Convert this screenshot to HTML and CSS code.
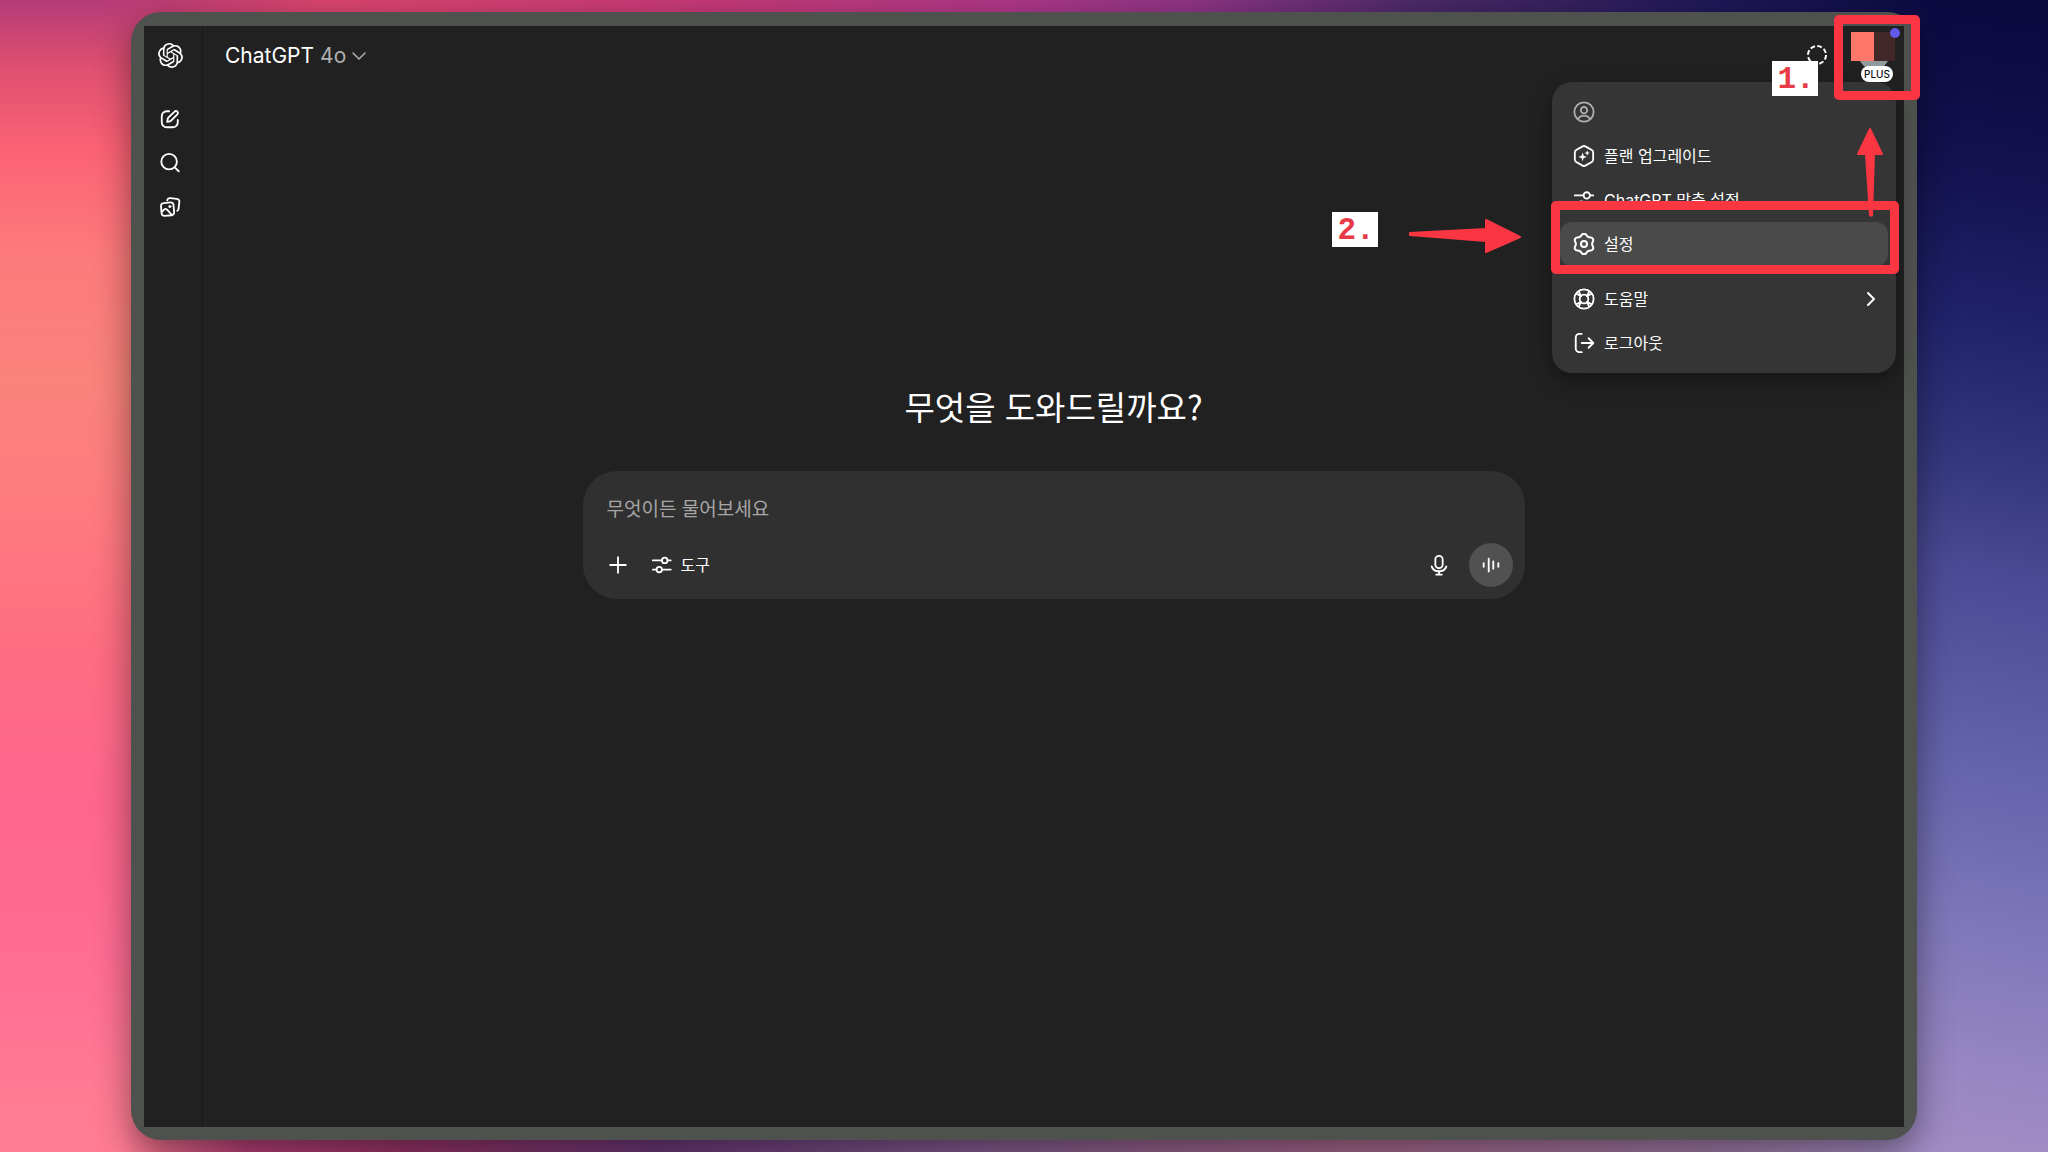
FILE: index.html
```html
<!DOCTYPE html>
<html lang="ko">
<head>
<meta charset="utf-8">
<meta name="viewport" content="width=device-width, initial-scale=1">
<title>ChatGPT</title>
<link rel="stylesheet" href="styles.css">
</head>
<body>
<div class="frame">
<div class="app">
  <nav class="sidebar" aria-label="사이드바">
    <a class="logo" href="#" aria-label="ChatGPT">
      <svg width="25" height="25" viewBox="0 0 24 24" fill="currentColor"><path d="M22.2819 9.8211a5.9847 5.9847 0 0 0-.5157-4.9108 6.0462 6.0462 0 0 0-6.5098-2.9A6.0651 6.0651 0 0 0 4.9807 4.1818a5.9847 5.9847 0 0 0-3.9977 2.9 6.0462 6.0462 0 0 0 .7427 7.0966 5.98 5.98 0 0 0 .511 4.9107 6.051 6.051 0 0 0 6.5146 2.9001A5.9847 5.9847 0 0 0 13.2599 24a6.0557 6.0557 0 0 0 5.7718-4.2058 5.9894 5.9894 0 0 0 3.9977-2.9001 6.0557 6.0557 0 0 0-.7475-7.0729zm-9.022 12.6081a4.4755 4.4755 0 0 1-2.8764-1.0408l.1419-.0804 4.7783-2.7582a.7948.7948 0 0 0 .3927-.6813v-6.7369l2.02 1.1686a.071.071 0 0 1 .038.052v5.5826a4.504 4.504 0 0 1-4.4945 4.4944zm-9.6607-4.1254a4.4708 4.4708 0 0 1-.5346-3.0137l.142.0852 4.783 2.7582a.7712.7712 0 0 0 .7806 0l5.8428-3.3685v2.3324a.0804.0804 0 0 1-.0332.0615L9.74 19.9502a4.4992 4.4992 0 0 1-6.1408-1.6464zM2.3408 7.8956a4.485 4.485 0 0 1 2.3655-1.9728V11.6a.7664.7664 0 0 0 .3879.6765l5.8144 3.3543-2.0201 1.1685a.0757.0757 0 0 1-.071 0l-4.8303-2.7865A4.504 4.504 0 0 1 2.3408 7.872zm16.5963 3.8558L13.1038 8.364 15.1192 7.2a.0757.0757 0 0 1 .071 0l4.8303 2.7913a4.4944 4.4944 0 0 1-.6765 8.1042v-5.6772a.79.79 0 0 0-.407-.667zm2.0107-3.0231l-.142-.0852-4.7735-2.7818a.7759.7759 0 0 0-.7854 0L9.409 9.2297V6.8974a.0662.0662 0 0 1 .0284-.0615l4.8303-2.7866a4.4992 4.4992 0 0 1 6.6802 4.66zM8.3065 12.863l-2.02-1.1638a.0804.0804 0 0 1-.038-.0567V6.0742a4.4992 4.4992 0 0 1 7.3757-3.4537l-.142.0805L8.704 5.459a.7948.7948 0 0 0-.3927.6813zm1.0976-2.3654l2.602-1.4998 2.6069 1.4998v2.9994l-2.5974 1.4997-2.6067-1.4997Z"/></svg>
    </a>
    <button class="side-button" aria-label="새 채팅">
      <svg class="icon" viewBox="0 0 24 24"><path d="M11 3.500H8.500a5.500 5.500 0 0 0-5.500 5.500v6.500a5.500 5.500 0 0 0 5.500 5.500h6.500a5.500 5.500 0 0 0 5.500-5.500V13"/><path d="M9 15.200l.5-3.200a3 3 0 0 1 .9-1.700l6.600-6.400a2.100 2.100 0 0 1 3 0 2.100 2.100 0 0 1 0 3l-6.500 6.700a3 3 0 0 1-1.600.9z"/></svg>
    </button>
    <button class="side-button" aria-label="검색">
      <svg class="icon" viewBox="0 0 24 24"><circle cx="11" cy="10.500" r="8.500"/><path d="M17.200 16.700l4.300 4.300"/></svg>
    </button>
    <button class="side-button" aria-label="라이브러리">
      <svg class="icon" viewBox="0 0 24 24"><path d="M5.200 7.700l7.300-.7a3 3 0 0 1 3.300 2.700l.7 8a3 3 0 0 1-2.700 3.300l-7.700.7a3 3 0 0 1-3.300-2.700l-.6-8a3 3 0 0 1 3-3.300z"/><path d="M3 17.300l2.600-2.500a2.300 2.300 0 0 1 3.200 0L14 20.700"/><circle cx="11.800" cy="11.500" r="1.200" fill="currentColor" stroke-width="1"/><path d="M9 4.700c.3-1.400 1.600-2.500 3.200-2.400l7.300.8a3 3 0 0 1 2.700 3.400l-.9 7.500c-.1 1-.6 1.700-1.300 2.100"/></svg>
    </button>
  </nav>

  <div class="workspace">
    <header class="topbar">
      <button class="model">ChatGPT <span class="model-name">4o</span>
        <svg class="model-chevron" viewBox="0 0 14 14"><path d="M1 4l6 6 6-6"/></svg>
      </button>
      <div class="account">
        <button class="temporary" aria-label="임시 채팅">
          <svg width="22" height="22" viewBox="0 0 22 22"><circle cx="11" cy="11" r="9" stroke-linecap="butt" stroke-dasharray="4.7 2.37"/></svg>
        </button>
        <button class="avatar" aria-label="프로필 메뉴">
          <span class="avatar-photo"></span>
          <span class="avatar-mask"></span>
          <span class="avatar-dot"></span>
          <span class="plan">PLUS</span>
        </button>
      </div>
    </header>

    <main class="hero">
      <h1 class="greeting">무엇을 도와드릴까요?</h1>
      <form class="composer">
        <input class="prompt" type="text" aria-label="메시지" placeholder="무엇이든 물어보세요">
        <div class="actions">
          <button class="action" type="button" aria-label="추가">
            <svg class="icon" viewBox="0 0 24 24"><path d="M12 3.500v17M3.500 12h17"/></svg>
          </button>
          <button class="action tools" type="button">
            <svg class="icon" viewBox="0 0 24 24"><path d="M2 7h9.500M18 7h3.500M2 17h4M12.500 17h9"/><circle cx="15" cy="7" r="3"/><circle cx="9" cy="17" r="3"/></svg>
            도구
          </button>
          <button class="action mic" type="button" aria-label="받아쓰기">
            <svg class="icon" viewBox="0 0 24 24"><rect x="8" y="2" width="8" height="13.500" rx="4"/><path d="M4 13.500c1 3.300 4.200 5.300 8 5.300s7-2 8-5.300M12 19v3M9 22.500h6"/></svg>
          </button>
          <button class="voice" type="button" aria-label="음성 모드">
            <svg class="icon" viewBox="0 0 24 24"><path d="M4 10v4M9.500 5v14M14.500 8v8M20 10v4"/></svg>
          </button>
        </div>
      </form>
    </main>
  </div>

  <div class="menu" role="menu">
    <button class="item muted" role="menuitem" aria-label="계정">
      <svg class="icon" viewBox="0 0 24 24"><circle cx="12" cy="12" r="10.500"/><circle cx="12" cy="10" r="3.500"/><path d="M5.500 20c1.300-2.700 3.700-4 6.500-4s5.200 1.300 6.500 4"/></svg>
    </button>
    <button class="item" role="menuitem">
      <svg class="icon" viewBox="0 0 24 24"><path d="M10.500 1.500a3 3 0 0 1 3 0l7 4a3 3 0 0 1 1.500 2.600v7.800a3 3 0 0 1-1.500 2.600l-7 4a3 3 0 0 1-3 0l-7-4A3 3 0 0 1 2 15.900V8.100a3 3 0 0 1 1.500-2.600z"/><path class="solid" d="M10.500 8.300l1.200 3.500 3.500 1.200-3.500 1.200-1.200 3.500-1.200-3.500L5.800 13l3.500-1.200zM15.500 5.800l.8 2.200 2.200.8-2.200.8-.8 2.200-.8-2.200-2.200-.8 2.200-.8z"/></svg>
      플랜 업그레이드
    </button>
    <button class="item covered" role="menuitem">
      <svg class="icon" viewBox="0 0 24 24"><path d="M2 7h9.500M18.500 7H22M2 17h4M12 17h10"/><circle cx="15" cy="7" r="3.500"/><circle cx="9" cy="17" r="3.500"/></svg>
      ChatGPT 맞춤 설정
    </button>
    <button class="item active" role="menuitem">
      <svg class="icon" viewBox="1 1 22 22"><path d="M14.250 3A5 5 0 0 0 18.700 5.500A2.600 2.600 0 0 1 20.900 9.400A5 5 0 0 0 20.900 14.600A2.600 2.600 0 0 1 18.700 18.500A5 5 0 0 0 14.250 21A2.600 2.600 0 0 1 9.750 21A5 5 0 0 0 5.300 18.500A2.600 2.600 0 0 1 3.100 14.600A5 5 0 0 0 3.100 9.400A2.600 2.600 0 0 1 5.300 5.500A5 5 0 0 0 9.750 3A2.600 2.600 0 0 1 14.250 3z"/><circle cx="12" cy="12" r="3"/></svg>
      설정
    </button>
    <hr class="gap">
    <button class="item" role="menuitem">
      <svg class="icon" viewBox="0 0 24 24"><circle cx="12" cy="12" r="10.500"/><circle cx="12" cy="12" r="4.700"/><path d="M3.800 6.300l5 2.500M6.300 3.800l2.500 5M17.700 3.800l-2.500 5M20.200 6.300l-5 2.500M3.800 17.700l5-2.500M6.300 20.200l2.500-5M17.700 20.200l-2.500-5M20.200 17.700l-5-2.500"/></svg>
      도움말
      <svg class="submenu" viewBox="0 0 10 16"><path d="M2 2l6 6-6 6"/></svg>
    </button>
    <button class="item" role="menuitem">
      <svg class="icon" viewBox="0 0 24 24"><path d="M9.500 2H7a4 4 0 0 0-4 4v12a4 4 0 0 0 4 4h2.500M9.500 12H22M17 6.800l5.200 5.200-5.200 5.200"/></svg>
      로그아웃
    </button>
  </div>

  <div class="mark mark-avatar"></div>
  <div class="mark mark-settings"></div>
  <span class="step step-one">1.</span>
  <span class="step step-two">2.</span>
  <svg class="arrow arrow-up" viewBox="0 0 28 90"><path d="M14 2L26 27H18L16 88.500H14L10 27H2z"/></svg>
  <svg class="arrow arrow-right" viewBox="0 0 114 36"><path d="M2 15L78 11V2L112 19 78 34V23L2 17z"/></svg>
</div>
</div>
</body>
</html>
```

FILE: styles.css
```css
* {
  box-sizing: border-box;
}

body {
  display: flex;
  min-height: 100vh;
  margin: 0;
  padding: 12px 131px;
  color: #fff;
  font-family: Inter, "Noto Sans CJK KR", sans-serif;
  background:
    linear-gradient(90deg, #dc467000 5%, #dc4670 16%, #c83a78 34%, #b03888 49%, #903585 58%, #4d2a68 69%, #1e1858 84%, #12104a00 95%) top / 100% 24px no-repeat,
    linear-gradient(90deg, #c84a8000 6%, #b84078 12%, #9a3468 20%, #6c3878 32%, #855c90 48%, #a8688c 66%, #a07aa8 84%, #a78fc400 94%) bottom / 100% 30px no-repeat,
    linear-gradient(180deg, #b53b78 0%, #e05070 6%, #fc6275 13%, #fc7a7c 22%, #fa837b 33%, #fe7a80 45%, #ff6c82 57%, #ff668e 70%, #ff6c94 83%, #ff7c92 96%) left / 50% 100% no-repeat,
    linear-gradient(190deg, #0a083e 0%, #141250 14%, #20226a 25%, #32367c 35%, #4c4a94 44%, #6664ac 59%, #8078ba 71%, #9a88c4 83%, #ac94c6 94%) right / 50% 100% no-repeat;
}

button,
input {
  margin: 0;
  padding: 0;
  border: 0;
  background: none;
  color: inherit;
  font: inherit;
}

svg {
  display: block;
  flex: none;
  fill: none;
  stroke: currentColor;
  stroke-width: 2;
  stroke-linecap: round;
  stroke-linejoin: round;
}

.icon {
  width: 22px;
  height: 22px;
}

.frame {
  display: flex;
  flex: 1;
  padding: 14px 13px 13px;
  border-radius: 30px;
  background: #4f514f;
  box-shadow: 0 12px 36px #00000070;
}

.app {
  position: relative;
  display: flex;
  flex: 1;
  background: #212121;
}

.sidebar {
  display: flex;
  flex-direction: column;
  align-items: center;
  width: 59px;
  padding-right: 6px;
  border-right: 1px solid #1a1a1a;
}

.logo {
  display: grid;
  place-items: center;
  height: 58px;
  margin-bottom: 13px;
  color: #fff;
}

.logo svg {
  fill: currentColor;
  stroke: none;
}

.side-button {
  display: grid;
  place-items: center;
  width: 44px;
  height: 44px;
}

.workspace {
  display: flex;
  flex: 1;
  flex-direction: column;
}

.topbar {
  display: flex;
  align-items: center;
  justify-content: space-between;
  height: 58px;
  padding: 0 9px 0 22px;
}

.model {
  display: flex;
  align-items: center;
  gap: 6px;
  padding-top: 2px;
  font-size: 21px;
  line-height: 32px;
}

.model-name {
  color: #afafaf;
}

.model-chevron {
  width: 14px;
  height: 14px;
  stroke: #afafaf;
  stroke-width: 1.5;
}

.account {
  display: flex;
  align-items: center;
  gap: 23px;
}

.avatar {
  position: relative;
  width: 44px;
  height: 44px;
}

.avatar-photo {
  position: absolute;
  top: 7px;
  left: 8px;
  width: 30px;
  height: 30px;
  border-radius: 50%;
  background: #8f9a9c;
}

.avatar-mask {
  position: absolute;
  top: -1px;
  left: 0;
  width: 44px;
  height: 29px;
  background: linear-gradient(90deg, #ff7768 52%, #432829 52%);
}

.avatar-dot {
  position: absolute;
  top: -5px;
  right: -5px;
  width: 10px;
  height: 10px;
  border-radius: 50%;
  background: #6259e8;
}

.plan {
  position: absolute;
  z-index: 1;
  top: 33px;
  left: 10px;
  width: 32px;
  border-radius: 8px;
  background: #fff;
  color: #111;
  font-size: 10px;
  font-weight: 500;
  line-height: 16px;
  text-align: center;
}

.hero {
  display: flex;
  flex: 1;
  flex-direction: column;
  align-items: center;
  gap: 44px;
  padding: 301px 24px 24px;
}

.greeting,
.prompt {
  font-family: "Noto Sans CJK KR", sans-serif;
}

.greeting {
  margin: 0;
  font-size: 33px;
  font-weight: 400;
  line-height: 42px;
}

.composer {
  display: flex;
  flex-direction: column;
  justify-content: space-between;
  width: 100%;
  max-width: 942px;
  padding: 22px 12px 12px 24px;
  border-radius: 34px;
  background: #303030;
  gap: 22px;
}

.prompt {
  width: 100%;
  height: 28px;
  outline: 0;
  font-size: 19px;
}

.prompt::placeholder {
  color: #a6a6a6;
}

.actions {
  display: flex;
  align-items: center;
}

.action {
  display: flex;
  align-items: center;
  gap: 8px;
  font-size: 16px;
  line-height: 24px;
}

.tools {
  margin-left: 22px;
}

.mic {
  margin-left: auto;
}

.voice {
  display: grid;
  place-items: center;
  width: 44px;
  height: 44px;
  margin-left: 19px;
  border-radius: 50%;
  background: #515151;
}

.menu {
  position: absolute;
  top: 56px;
  right: 8px;
  display: flex;
  flex-direction: column;
  width: 344px;
  padding: 8px;
  border-radius: 20px;
  background: #353535;
  box-shadow: 0 8px 20px #00000060;
}

.item {
  display: flex;
  align-items: center;
  gap: 9px;
  height: 44px;
  padding: 0 12px 0 13px;
  border-radius: 12px;
  font-size: 16px;
  line-height: 24px;
  white-space: nowrap;
}

.muted {
  color: #afafaf;
}

/* The lower part of this entry sits under the settings highlight. */
.covered {
  clip-path: inset(0 0 16px);
}

.active {
  background: #4a4a4a;
}

.gap {
  height: 11px;
  margin: 0;
  border: 0;
}

.solid {
  fill: currentColor;
  stroke: none;
}

.submenu {
  width: 10px;
  height: 16px;
  margin-left: auto;
}

.mark {
  position: absolute;
  border: 9px solid #fa3642;
  border-radius: 5px;
  pointer-events: none;
}

.mark-avatar {
  top: -11px;
  right: -16px;
  width: 86px;
  height: 85px;
}

.mark-settings {
  top: 175px;
  right: 5px;
  width: 348px;
  height: 73px;
}

.step {
  position: absolute;
  width: 46px;
  padding: 2px 0 0 2px;
  background: #fff;
  color: #e93a47;
  font-family: "Liberation Mono", monospace;
  font-size: 31px;
  font-weight: 700;
  line-height: 33px;
  text-align: center;
}

.step-one {
  top: 35px;
  right: 86px;
}

.step-two {
  top: 186px;
  right: 526px;
}

.arrow {
  position: absolute;
  fill: #fa3642;
  stroke: #fa3642;
}

.arrow-up {
  top: 101px;
  right: 20px;
  width: 28px;
  height: 90px;
}

.arrow-right {
  top: 192px;
  right: 382px;
  width: 114px;
  height: 36px;
}
```
